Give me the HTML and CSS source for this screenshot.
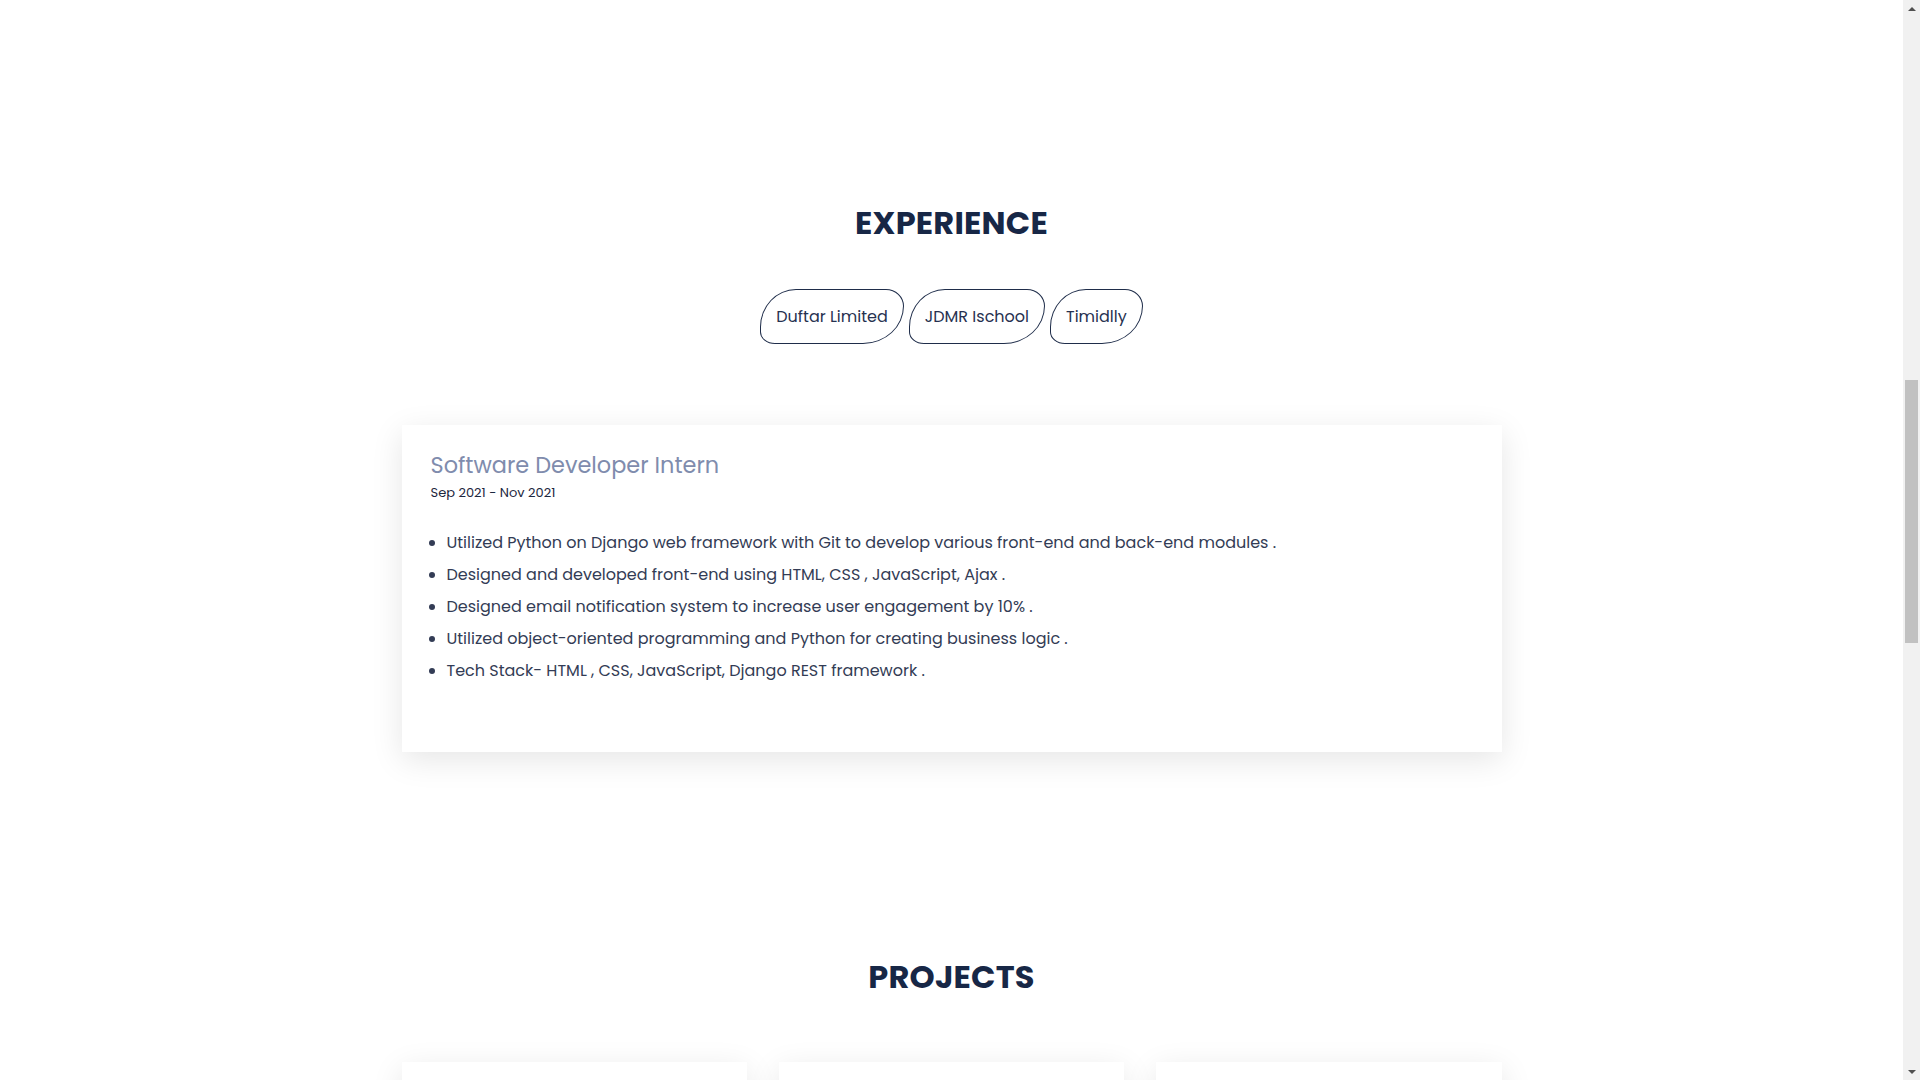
FILE: index.html
```html
<!DOCTYPE html>
<html lang="en">
<head>
<meta charset="utf-8">
<title>Experience</title>
<link rel="stylesheet" href="styles.css">
</head>
<body>
<div class="viewport">
  <main class="page">
    <section class="experience">
      <h2 class="section-title">EXPERIENCE</h2>
      <div class="tabs">
        <button class="tab">Duftar Limited</button>
        <button class="tab">JDMR Ischool</button>
        <button class="tab">Timidlly</button>
      </div>
      <div class="container">
        <article class="job-card">
          <h3 class="job-title">Software Developer Intern</h3>
          <p class="job-date">Sep 2021 - Nov 2021</p>
          <ul class="job-list">
            <li>Utilized Python on Django web framework with Git to develop various front-end and back-end modules .</li>
            <li>Designed and developed front-end using HTML, CSS , JavaScript, Ajax .</li>
            <li>Designed email notification system to increase user engagement by 10% .</li>
            <li>Utilized object-oriented programming and Python for creating business logic .</li>
            <li>Tech Stack- HTML , CSS, JavaScript, Django REST framework .</li>
          </ul>
        </article>
      </div>
    </section>
    <section class="projects">
      <h2 class="section-title">PROJECTS</h2>
      <div class="container project-grid">
        <div class="project-card"></div>
        <div class="project-card"></div>
        <div class="project-card"></div>
      </div>
    </section>
  </main>
  <div class="scrollbar" aria-hidden="true">
    <div class="sb-button"><span class="arrow-up"></span></div>
    <div class="sb-track"><div class="sb-thumb"></div></div>
    <div class="sb-button"><span class="arrow-down"></span></div>
  </div>
</div>
</body>
</html>
```
FILE: styles.css
```css
html, body {
  margin: 0;
  padding: 0;
  height: 100%;
  overflow: hidden;
  background: #ffffff;
}
body {
  font-family: "Poppins", "Open Sans", "Noto Sans", sans-serif;
  color: #2f3850;
}
.viewport {
  display: flex;
  height: 100vh;
}
.page {
  flex: 1;
  min-width: 0;
  overflow: hidden;
}
.scrollbar {
  width: 17px;
  flex: 0 0 17px;
  display: flex;
  flex-direction: column;
  background: #f1f1f1;
}
.sb-button {
  height: 17px;
  flex: 0 0 17px;
  display: flex;
  align-items: center;
  justify-content: center;
}
.arrow-up {
  width: 0;
  height: 0;
  border-left: 4px solid transparent;
  border-right: 4px solid transparent;
  border-bottom: 4px solid #505050;
}
.arrow-down {
  width: 0;
  height: 0;
  border-left: 4px solid transparent;
  border-right: 4px solid transparent;
  border-top: 4px solid #505050;
}
.sb-track {
  flex: 1;
  padding: 0 2px;
}
.sb-thumb {
  margin-top: 363px;
  height: 263px;
  background: #c1c1c1;
}
.container {
  width: 1100px;
  margin: 0 auto;
}
.experience {
  padding-top: 202px;
}
.section-title {
  margin: 0;
  text-align: center;
  font-size: 32px;
  line-height: 41px;
  font-weight: 700;
  color: #172746;
  letter-spacing: 0.2px;
}
.tabs {
  display: flex;
  justify-content: center;
  gap: 5px;
  margin-top: 46px;
}
.tab {
  height: 55px;
  padding: 0 15px;
  background: #ffffff;
  border: 1px solid #1f2d4a;
  border-radius: 36px 18px 41px 15px / 38px 17px 38px 12px;
  font-family: inherit;
  font-size: 16px;
  color: #263150;
  cursor: pointer;
}
.job-card {
  margin-top: 81px;
  background: #ffffff;
  padding: 22px 29px 30px;
  box-shadow: 0 8px 30px rgba(0, 0, 0, 0.10);
}
.job-title {
  margin: 0;
  font-size: 22.4px;
  line-height: 36px;
  font-weight: 400;
  color: #7f8cad;
}
.job-date {
  margin: 0;
  font-size: 13px;
  line-height: 20px;
  color: #1d2740;
}
.job-list {
  margin: 24px 0 35px;
  padding-left: 16px;
  font-size: 16px;
  line-height: 32px;
  color: #333c55;
}
.projects {
  padding-top: 204px;
}
.project-grid {
  margin-top: 65px;
  display: grid;
  grid-template-columns: repeat(3, 1fr);
  gap: 32px;
}
.project-card {
  height: 420px;
  background: #ffffff;
  box-shadow: 0 8px 30px rgba(0, 0, 0, 0.10);
}
```
